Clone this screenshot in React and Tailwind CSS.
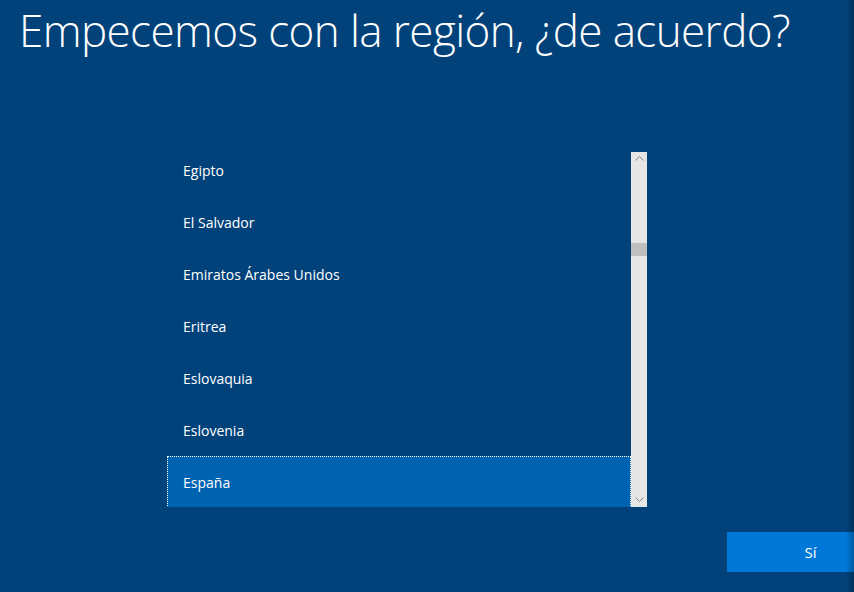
import React from 'react';

const countries = [
  'Egipto',
  'El Salvador',
  'Emiratos Árabes Unidos',
  'Eritrea',
  'Eslovaquia',
  'Eslovenia',
  'España',
];

function ScrollBar() {
  return (
    <div className="w-[16px] h-full bg-[#e6e6e6] flex flex-col items-center relative">
      <svg width="9" height="5" viewBox="0 0 9 5" className="mt-[4px]">
        <path d="M0.5 4.5 L4.5 0.5 L8.5 4.5" fill="none" stroke="#858585" strokeWidth="1" />
      </svg>
      <div className="absolute left-0 top-[91px] w-[16px] h-[13px] bg-[#bfbfbf]" />
      <svg width="9" height="5" viewBox="0 0 9 5" className="mt-auto mb-[5px]">
        <path d="M0.5 0.5 L4.5 4.5 L8.5 0.5" fill="none" stroke="#858585" strokeWidth="1" />
      </svg>
    </div>
  );
}

export default function App() {
  return (
    <div
      className="relative w-[854px] h-[592px] bg-[#01427a] text-white overflow-hidden flex flex-col"
      style={{ fontFamily: '"Open Sans", "Noto Sans", sans-serif' }}
    >
      <h1 className="pt-[1px] pl-[19px] text-[44px] font-light leading-[58px] tracking-[-0.6px] whitespace-nowrap">
        Empecemos con la región, ¿de acuerdo?
      </h1>

      <div className="mt-[93px] ml-[167px] flex h-[355px]">
        <div className="w-[464px] h-full overflow-hidden">
          <div className="-mt-[8px] flex flex-col">
            {countries.map((c) => (
              <div
                key={c}
                className={`h-[52px] flex items-center text-[14px] ${
                  c === 'España'
                    ? 'bg-[#0063b1] border border-dotted border-white pl-[15px]'
                    : 'pl-[16px]'
                }`}
              >
                {c}
              </div>
            ))}
          </div>
        </div>
        <ScrollBar />
      </div>

      <div className="mt-auto mb-[20px] flex justify-end">
        <button className="w-[127px] h-[40px] bg-[#0078d7] text-white text-[15px] pl-[40px]">
          Sí
        </button>
      </div>

      <div className="pointer-events-none absolute right-0 top-0 h-full w-[8px] bg-gradient-to-r from-transparent to-black/25" />
    </div>
  );
}
